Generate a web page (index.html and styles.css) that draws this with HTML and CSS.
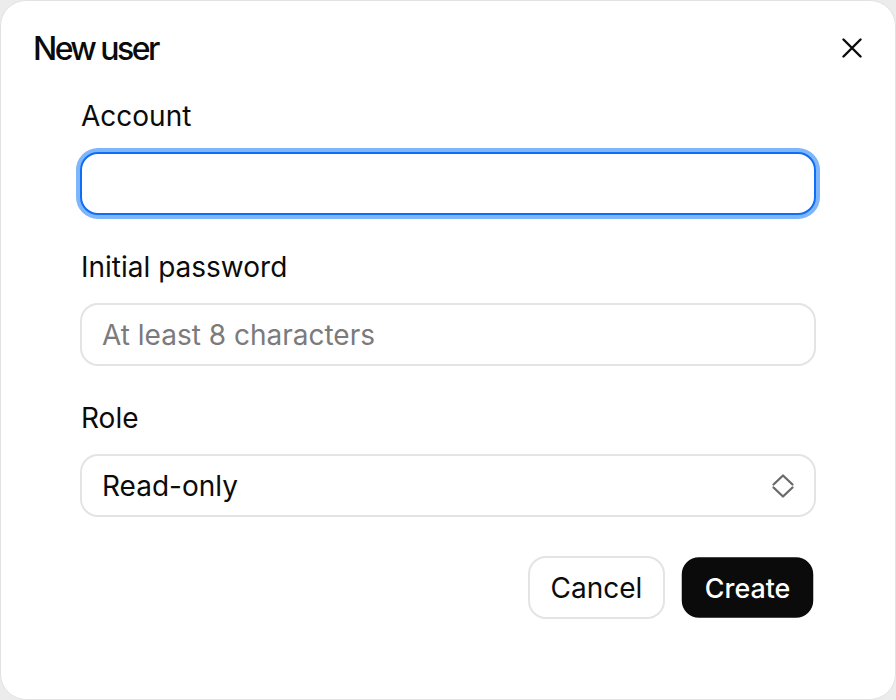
FILE: index.html
```html
<!DOCTYPE html>
<html lang="en">
<head>
<meta charset="utf-8">
<title>New user</title>
<link rel="stylesheet" href="styles.css">
</head>
<body>
<div class="dialog">
  <header class="head">
    <h2 class="title">New user</h2>
    <button class="close" type="button" aria-label="Close">
      <svg width="20" height="20" viewBox="0 0 20 20"><path d="M1.5 1.5 L18.5 18.5 M18.5 1.5 L1.5 18.5" stroke="#0b0b0b" stroke-width="2.4" stroke-linecap="round" fill="none"/></svg>
    </button>
  </header>
  <form class="form">
    <div class="field">
      <label class="label">Account</label>
      <input class="input input-focus" type="text">
    </div>
    <div class="field">
      <label class="label">Initial password</label>
      <input class="input" type="password" placeholder="At least 8 characters">
    </div>
    <div class="field">
      <label class="label">Role</label>
      <div class="select">
        <span class="select-value">Read-only</span>
        <svg class="chev" width="24" height="26" viewBox="0 0 24 26"><path d="M2.5 11.5 L12 2.5 L21.5 11.5 M2.5 14.5 L12 23.5 L21.5 14.5" stroke="#6a6a6a" stroke-width="2.3" stroke-linecap="round" stroke-linejoin="round" fill="none"/></svg>
      </div>
    </div>
    <div class="actions">
      <button class="btn btn-ghost" type="button">Cancel</button>
      <button class="btn btn-primary is-pressed" type="button">Create</button>
    </div>
  </form>
</div>
</body>
</html>
```
FILE: styles.css
```css
* { box-sizing: border-box; }
html, body { margin: 0; padding: 0; }
body {
  background: #ececec;
  font-family: Inter, "Liberation Sans", sans-serif;
  color: #0b0b0b;
  width: 896px;
  height: 700px;
  overflow: hidden;
}
.dialog {
  width: 896px;
  height: 700px;
  background: #fff;
  border: 1px solid #e2e2e2;
  border-radius: 26px;
  padding: 0 80px 0 32px;
  display: flex;
  flex-direction: column;
}
.head {
  display: flex;
  align-items: center;
  justify-content: space-between;
  height: 98px;
  margin-right: -80px;
  padding-right: 33px;
}
.title {
  margin: 0;
  font-size: 32px;
  font-weight: 500;
  letter-spacing: -0.08em;
  line-height: 1;
  padding-bottom: 3px;
}
.close {
  border: 0;
  background: none;
  padding: 0;
  width: 20px;
  height: 20px;
  display: flex;
  cursor: pointer;
  margin-bottom: 5px;
}
.form {
  margin-left: 47px;
  margin-right: 1px;
  display: flex;
  flex-direction: column;
}
.field {
  display: flex;
  flex-direction: column;
  margin-bottom: 35px;
}
.label {
  font-size: 28px;
  line-height: 34px;
  margin-bottom: 19px;
  font-weight: 400;
  padding-left: 1px;
}
.input, .select {
  height: 63px;
  width: 736px;
  border: 2px solid #e4e4e4;
  border-radius: 18px;
  padding: 0 20px;
  font-family: inherit;
  font-size: 28px;
  color: #0b0b0b;
  background: #fff;
  outline: none;
}
.input::placeholder { color: #7b7b7b; }
.input-focus {
  border: 2px solid #0e6ef7;
  box-shadow: 0 0 0 4px #7fb5fb;
}
.select {
  display: flex;
  align-items: center;
  justify-content: space-between;
  padding-right: 19px;
}
.chev { display: block; }
.actions {
  display: flex;
  justify-content: flex-end;
  gap: 14px;
  margin-top: 4px;
  margin-right: -2px;
}
.btn {
  height: 63px;
  border-radius: 18px;
  font-family: inherit;
  font-size: 28px;
  padding: 0 20.5px;
  cursor: pointer;
}
.btn-ghost {
  background: #fff;
  border: 2px solid #e4e4e4;
  color: #0b0b0b;
}
.btn-primary {
  background: #0b0b0b;
  border: 2px solid #0b0b0b;
  color: #fff;
  font-weight: 500;
  padding: 0 22px;
}
.is-pressed { transform: scale(0.96); }
```
